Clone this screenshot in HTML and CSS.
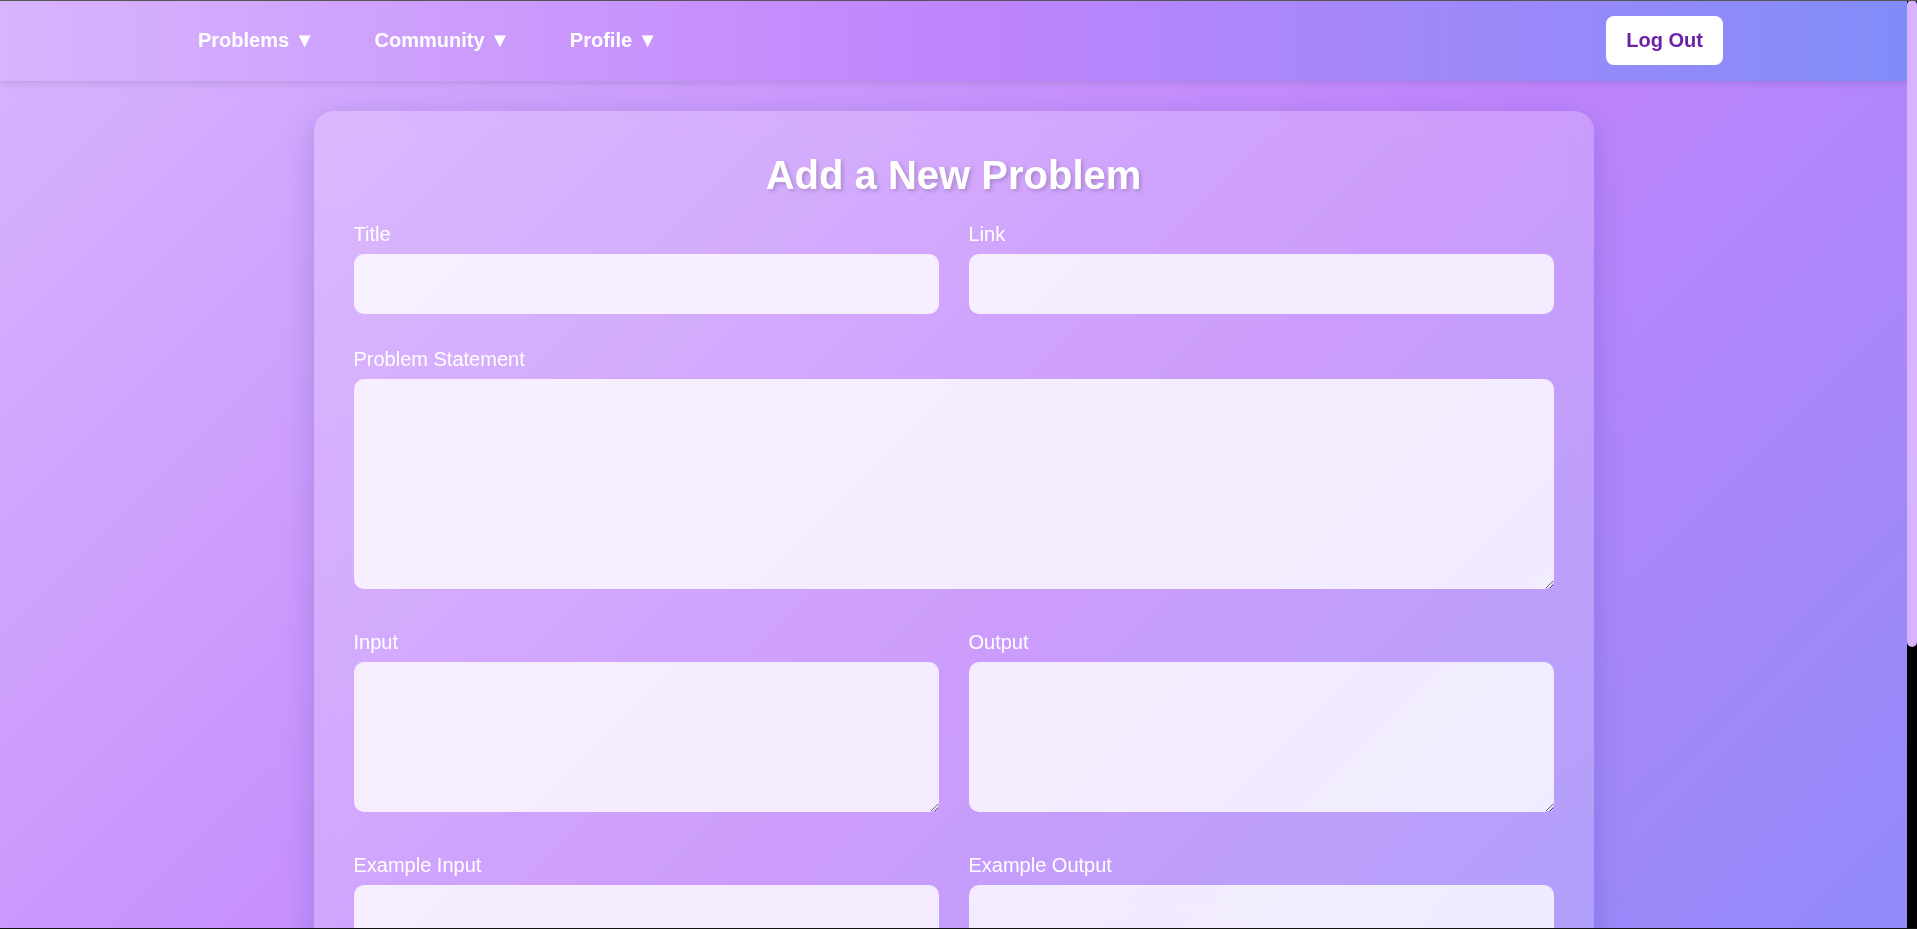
FILE: index.html
```html
<!DOCTYPE html>
<html lang="en">
<head>
<meta charset="utf-8">
<title>Add a New Problem</title>
<link rel="stylesheet" href="styles.css">
</head>
<body>
<div class="scrollbar"><div class="scrollbar-thumb"></div></div>
<div class="frame"></div>
<nav class="navbar">
  <ul class="nav-links">
    <li class="nav-item">Problems ▼</li>
    <li class="nav-item">Community ▼</li>
    <li class="nav-item">Profile ▼</li>
  </ul>
  <button class="logout" type="button">Log Out</button>
</nav>
<main class="card">
  <h1 class="card-title">Add a New Problem</h1>
  <form class="problem-form">
    <div class="row row-inputs">
      <div class="field">
        <label class="field-label" for="title">Title</label>
        <input class="field-input" id="title" type="text">
      </div>
      <div class="field">
        <label class="field-label" for="link">Link</label>
        <input class="field-input" id="link" type="text">
      </div>
    </div>
    <div class="row row-single">
      <div class="field">
        <label class="field-label" for="statement">Problem Statement</label>
        <textarea class="field-input field-area area-large" id="statement"></textarea>
      </div>
    </div>
    <div class="row">
      <div class="field">
        <label class="field-label" for="input">Input</label>
        <textarea class="field-input field-area" id="input"></textarea>
      </div>
      <div class="field">
        <label class="field-label" for="output">Output</label>
        <textarea class="field-input field-area" id="output"></textarea>
      </div>
    </div>
    <div class="row">
      <div class="field">
        <label class="field-label" for="exin">Example Input</label>
        <textarea class="field-input field-area" id="exin"></textarea>
      </div>
      <div class="field">
        <label class="field-label" for="exout">Example Output</label>
        <textarea class="field-input field-area" id="exout"></textarea>
      </div>
    </div>
    <div class="row row-inputs">
      <div class="field">
        <label class="field-label" for="difficulty">Difficulty</label>
        <input class="field-input" id="difficulty" type="text">
      </div>
      <div class="field">
        <label class="field-label" for="tags">Tags</label>
        <input class="field-input" id="tags" type="text">
      </div>
    </div>
    <button class="submit" type="button">Add Problem</button>
  </form>
</main>
</body>
</html>
```

FILE: styles.css
```css
* {
  box-sizing: border-box;
}

html {
  font-family: "Liberation Sans", Arial, sans-serif;
}

body {
  margin: 0;
  padding-right: 10px;
  min-height: 100vh;
  background: linear-gradient(135deg, #d8b4fe 0%, #c084fc 50%, #818cf8 100%);
}

/* page scrollbar, drawn over the right edge */
.scrollbar {
  position: fixed;
  top: 0;
  right: 0;
  bottom: 0;
  width: 10px;
  background: #000;
  z-index: 20;
}

.scrollbar-thumb {
  height: 647px;
  background: #d8b4fe;
  border-radius: 5px;
}

.frame {
  position: fixed;
  inset: 0;
  border-top: 1px solid #555;
  border-bottom: 1px solid #111;
  pointer-events: none;
  z-index: 30;
}

.navbar {
  position: relative;
  z-index: 1;
  height: 81px;
  display: flex;
  align-items: center;
  justify-content: space-between;
  padding: 0 184px 0 198px;
  background: linear-gradient(to right, #d8b4fe 0%, #c084fc 50%, #818cf8 100%);
  box-shadow: 0 2px 8px rgba(0, 0, 0, 0.12);
}

.nav-links {
  display: flex;
  gap: 60px;
  list-style: none;
  margin: 0;
  padding: 0;
}

.nav-item {
  color: #fff;
  font-size: 20px;
  line-height: 23px;
  font-weight: 700;
}

.logout {
  background: #fff;
  color: #6b21a8;
  border: none;
  border-radius: 8px;
  padding: 13px 20px;
  font-family: "Liberation Sans", Arial, sans-serif;
  font-size: 20px;
  line-height: 23px;
  font-weight: 700;
}

.card {
  width: 1280px;
  margin: 30px auto;
  padding: 41px 40px 40px;
  background: rgba(255, 255, 255, 0.2);
  border-radius: 20px;
  box-shadow: 0 8px 32px rgba(31, 38, 135, 0.2);
  backdrop-filter: blur(10px);
}

.card-title {
  margin: 0 0 25px;
  text-align: center;
  color: #fff;
  font-size: 40px;
  line-height: 46px;
  font-weight: 700;
  text-shadow: 2px 2px 4px rgba(0, 0, 0, 0.2);
}

.problem-form {
  margin: 0;
}

.row {
  display: grid;
  grid-template-columns: 1fr 1fr;
  column-gap: 30px;
  margin-bottom: 42px;
}

.row-inputs {
  margin-bottom: 34px;
}

.row-single {
  grid-template-columns: 1fr;
}

.field-label {
  display: block;
  color: #fff;
  font-size: 20px;
  line-height: 23px;
  margin-bottom: 8px;
}

.field-input {
  display: block;
  width: 100%;
  height: 60px;
  margin: 0;
  border: none;
  border-radius: 10px;
  background: rgba(255, 255, 255, 0.8);
  padding: 0 15px;
  font-family: "Liberation Sans", Arial, sans-serif;
  font-size: 20px;
  color: #333;
  outline: none;
}

.field-area {
  height: 150px;
  padding: 15px;
  resize: vertical;
}

.area-large {
  height: 210px;
}

.submit {
  display: block;
  width: 100%;
  height: 60px;
  border: none;
  border-radius: 10px;
  background: #fff;
  color: #6b21a8;
  font-family: "Liberation Sans", Arial, sans-serif;
  font-size: 20px;
  font-weight: 700;
}
```
